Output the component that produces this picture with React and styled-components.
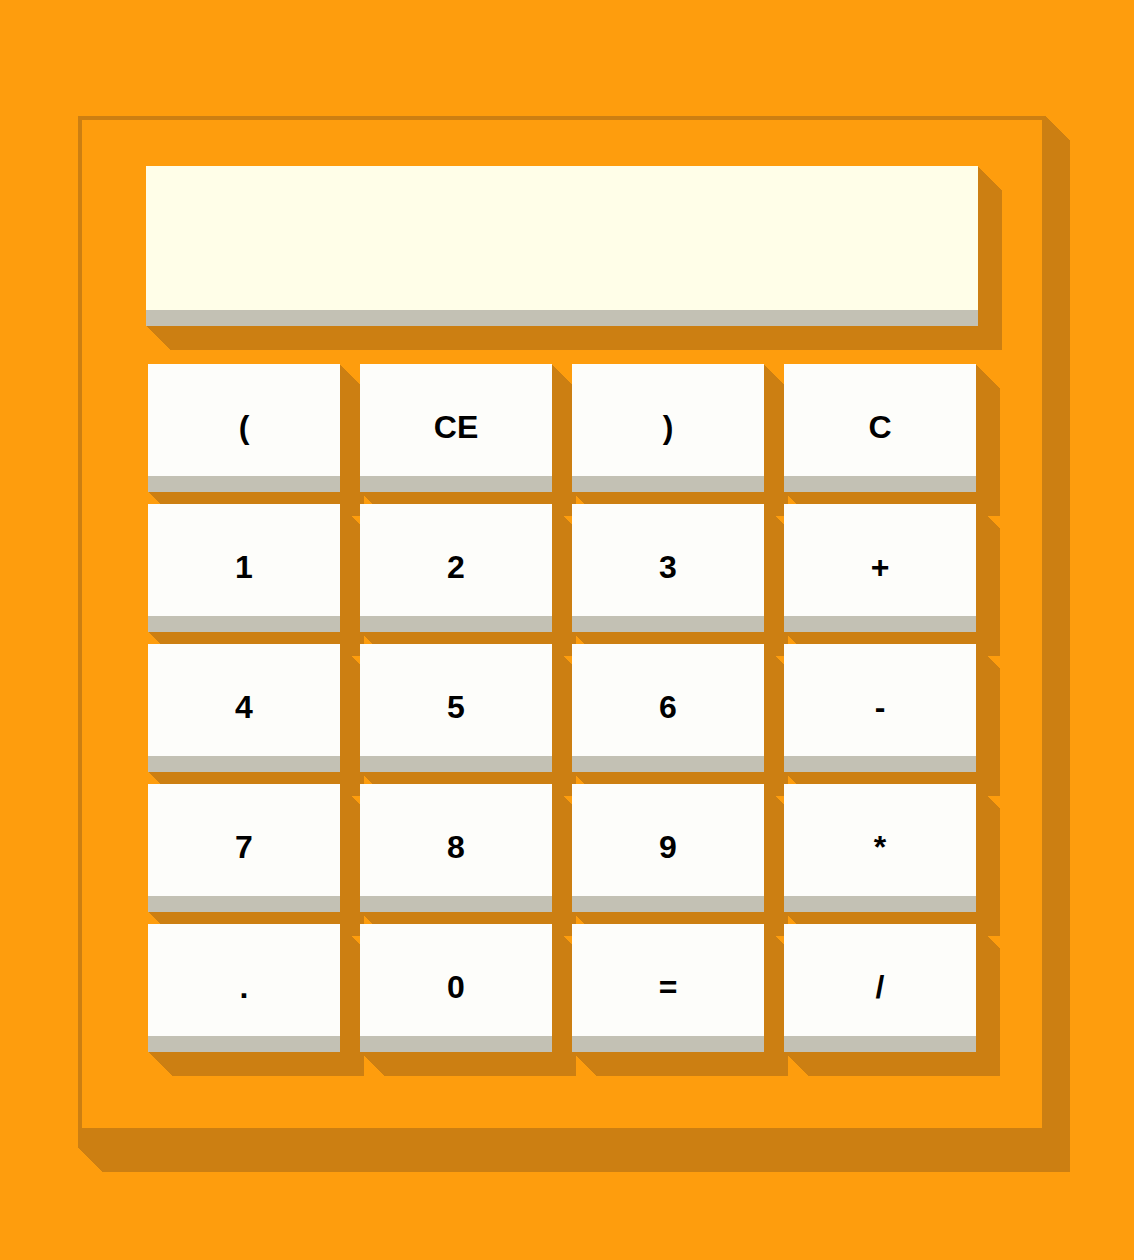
import React from "react";
import styled, { createGlobalStyle } from "styled-components";

const ORANGE = "#fe9d0d";
const DARK = "#cc7f12";

const longShadow = (n, color) =>
  Array.from({ length: n }, (_, i) => `${i + 1}px ${i + 1}px 0 ${color}`).join(", ");

const GlobalStyle = createGlobalStyle`
  html, body {
    margin: 0;
    padding: 0;
    background: ${ORANGE};
    font-family: "Liberation Sans", Arial, sans-serif;
  }
`;

const Page = styled.div`
  min-height: 1260px;
  padding: 116px 0 0 78px;
  box-sizing: border-box;
`;

const Frame = styled.div`
  width: 968px;
  box-sizing: border-box;
  border: 4px solid ${DARK};
  border-bottom-width: 20px;
  padding: 46px 64px 76px;
  background: ${ORANGE};
  box-shadow: ${longShadow(24, DARK)};
  display: flex;
  flex-direction: column;
  gap: 38px;
`;

const Display = styled.div`
  height: 160px;
  box-sizing: border-box;
  background: #fffee8;
  border-bottom: 16px solid #c3c1b4;
  box-shadow: ${longShadow(24, DARK)};
  font-size: 40px;
  font-weight: bold;
  display: flex;
  align-items: center;
  justify-content: flex-end;
  padding: 0 24px;
`;

const Keys = styled.div`
  display: grid;
  grid-template-columns: repeat(4, 192px);
  grid-auto-rows: 128px;
  column-gap: 20px;
  row-gap: 12px;
  justify-content: center;
`;

const Key = styled.button`
  box-sizing: border-box;
  margin: 0;
  border: none;
  border-bottom: 16px solid #c3c1b4;
  border-radius: 0;
  background: #fdfdfa;
  box-shadow: ${longShadow(24, DARK)};
  font-family: "Liberation Sans", Arial, sans-serif;
  font-size: 32px;
  font-weight: bold;
  color: #000;
  display: flex;
  align-items: center;
  justify-content: center;
  padding: 14px 0 0;
  cursor: pointer;
`;

const labels = [
  "(", "CE", ")", "C",
  "1", "2", "3", "+",
  "4", "5", "6", "-",
  "7", "8", "9", "*",
  ".", "0", "=", "/",
];

export default function App() {
  return (
    <>
      <GlobalStyle />
      <Page>
        <Frame>
          <Display />
          <Keys>
            {labels.map((l) => (
              <Key key={l}>{l}</Key>
            ))}
          </Keys>
        </Frame>
      </Page>
    </>
  );
}
